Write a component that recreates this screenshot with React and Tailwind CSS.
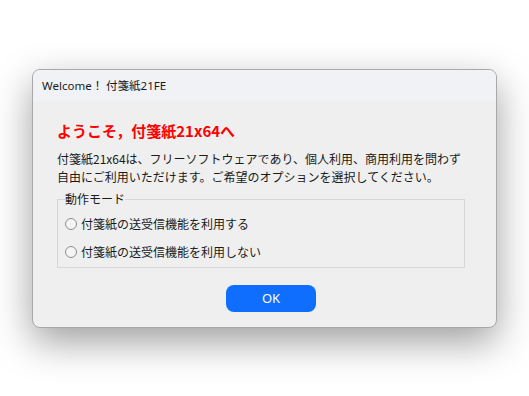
import React from 'react'

/**
 * Welcome dialog for 付箋紙21x64
 */
function Radio({ label }) {
  return (
    <label className="flex items-center h-[28px] pl-[7px] gap-[4px]">
      <span className="w-[12px] h-[12px] rounded-full border border-[#8e8e8e] bg-[#f4f4f4]" />
      <span>{label}</span>
    </label>
  )
}

export default function App() {
  return (
    <div className="w-[529px] h-[396px] bg-white pt-[69px] pl-[32px] font-['Noto_Sans_CJK_JP','Noto_Sans',sans-serif] text-[12px] text-[#1a1a1a]">
      <div className="w-[465px] h-[259px] rounded-[8px] border border-[#a8a8a8] bg-[#efefef] overflow-hidden shadow-[0_14px_38px_rgba(0,0,0,0.38)]">
        <div className="h-[31px] bg-[#f1f2f5] pl-[9px] flex items-center leading-none text-[11.5px] font-['Noto_Sans','Noto_Sans_CJK_JP',sans-serif]">
          Welcome！ 付箋紙21FE
        </div>
        <div className="pl-[24px] pt-[20px]">
          <h1 className="text-[15px] leading-[20px] font-bold text-[#ff0000]">ようこそ，付箋紙21x64へ</h1>
          <p className="mt-[9px] leading-[18px]">
            付箋紙21x64は、フリーソフトウェアであり、個人利用、商用利用を問わず<br />
            自由にご利用いただけます。ご希望のオプションを選択してください。
          </p>
          <fieldset className="mt-[4px] w-[408px] border border-[#d6d6d6] pt-[2px] pb-[1px]">
            <legend className="ml-[7px] leading-[18px]">動作モード</legend>
            <Radio label="付箋紙の送受信機能を利用する" />
            <Radio label="付箋紙の送受信機能を利用しない" />
          </fieldset>
          <button className="mt-[17px] ml-[169px] w-[90px] h-[27px] rounded-[8px] bg-[#0f6efd] text-white text-[13px] font-['Noto_Sans',sans-serif] flex items-center justify-center">
            OK
          </button>
        </div>
      </div>
    </div>
  )
}
